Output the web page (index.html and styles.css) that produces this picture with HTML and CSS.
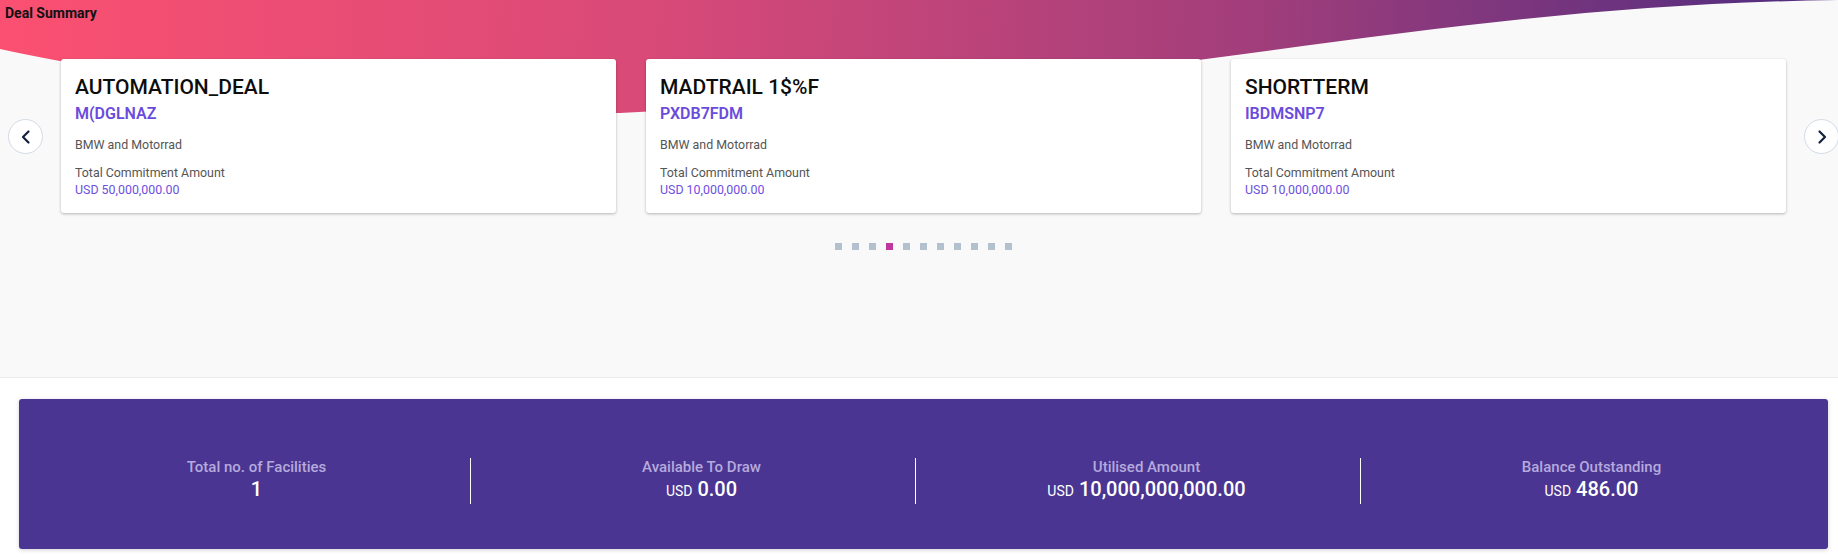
FILE: index.html
```html
<!DOCTYPE html>
<html lang="en">
<head>
<meta charset="utf-8">
<title>Deal Summary</title>
<link rel="stylesheet" href="styles.css">
</head>
<body>
<section class="summary">
  <svg class="wave" width="1838" height="120" viewBox="0 0 1838 120" preserveAspectRatio="none" aria-hidden="true">
    <defs>
      <linearGradient id="wg" x1="0" y1="0" x2="1838" y2="60" gradientUnits="userSpaceOnUse">
        <stop offset="0" stop-color="#fb5071"/>
        <stop offset="0.35" stop-color="#d94a78"/>
        <stop offset="0.68" stop-color="#a23e7b"/>
        <stop offset="1" stop-color="#4c2c80"/>
      </linearGradient>
    </defs>
    <path d="M0 0 H1838 V0 C1420 6 1200 84 620 113 C420 113 150 82 0 49 Z" fill="url(#wg)"/>
  </svg>
  <h1 class="page-title">Deal Summary</h1>
  <div class="carousel">
    <button class="nav-btn" aria-label="Previous">
      <svg width="16" height="16" viewBox="0 0 16 16"><path d="M10.5 2.5 L5 8 L10.5 13.5" fill="none" stroke="#13203d" stroke-width="2.2" stroke-linecap="round" stroke-linejoin="round"/></svg>
    </button>
    <div class="track-wrap">
      <div class="track">
        <div class="card">
          <div class="card-title">AUTOMATION_DEAL</div>
          <div class="card-code">M(DGLNAZ</div>
          <div class="card-sub">BMW and Motorrad</div>
          <div class="card-label">Total Commitment Amount</div>
          <div class="card-amount">USD 50,000,000.00</div>
        </div>
        <div class="card">
          <div class="card-title">MADTRAIL 1$%F</div>
          <div class="card-code">PXDB7FDM</div>
          <div class="card-sub">BMW and Motorrad</div>
          <div class="card-label">Total Commitment Amount</div>
          <div class="card-amount">USD 10,000,000.00</div>
        </div>
        <div class="card">
          <div class="card-title">SHORTTERM</div>
          <div class="card-code">IBDMSNP7</div>
          <div class="card-sub">BMW and Motorrad</div>
          <div class="card-label">Total Commitment Amount</div>
          <div class="card-amount">USD 10,000,000.00</div>
        </div>
      </div>
      <div class="dots">
        <span class="dot"></span><span class="dot"></span><span class="dot"></span><span class="dot active"></span><span class="dot"></span><span class="dot"></span><span class="dot"></span><span class="dot"></span><span class="dot"></span><span class="dot"></span><span class="dot"></span>
      </div>
    </div>
    <button class="nav-btn" aria-label="Next">
      <svg width="16" height="16" viewBox="0 0 16 16"><path d="M5.5 2.5 L11 8 L5.5 13.5" fill="none" stroke="#13203d" stroke-width="2.2" stroke-linecap="round" stroke-linejoin="round"/></svg>
    </button>
  </div>
</section>
<section class="totals">
  <div class="stats">
    <div class="stat">
      <div class="stat-body">
        <div class="stat-label">Total no. of Facilities</div>
        <div class="stat-value">1</div>
      </div>
      <span class="divider"></span>
    </div>
    <div class="stat">
      <div class="stat-body">
        <div class="stat-label">Available To Draw</div>
        <div class="stat-value"><span class="cur">USD</span> 0.00</div>
      </div>
      <span class="divider"></span>
    </div>
    <div class="stat">
      <div class="stat-body">
        <div class="stat-label">Utilised Amount</div>
        <div class="stat-value"><span class="cur">USD</span> 10,000,000,000.00</div>
      </div>
      <span class="divider"></span>
    </div>
    <div class="stat">
      <div class="stat-body">
        <div class="stat-label">Balance Outstanding</div>
        <div class="stat-value"><span class="cur">USD</span> 486.00</div>
      </div>
      <span class="divider hidden"></span>
    </div>
  </div>
</section>
</body>
</html>
```

FILE: styles.css
```css
* { box-sizing: border-box; }
html, body { margin: 0; padding: 0; }
body {
  width: 1838px;
  height: 557px;
  overflow: hidden;
  background: #ffffff;
  font-family: Roboto, "Liberation Sans", Arial, sans-serif;
  color: #111;
}

.summary {
  position: relative;
  height: 378px;
  background: #f9f9f9;
  border-bottom: 1px solid #ececec;
  overflow: hidden;
}

.wave {
  position: absolute;
  top: 0;
  left: 0;
}

.page-title {
  position: relative;
  margin: 0;
  padding: 4px 0 0 5px;
  height: 59px;
  font-size: 14px;
  line-height: 18px;
  font-weight: 700;
  color: #111;
}

.carousel {
  position: relative;
  display: flex;
  align-items: flex-start;
  gap: 18px;
  padding-left: 8px;
  width: 1840px;
}

.nav-btn {
  flex: none;
  width: 35px;
  height: 35px;
  margin-top: 60px;
  border-radius: 50%;
  border: 1px solid #d3dbe5;
  background: #ffffff;
  padding: 0;
  display: flex;
  align-items: center;
  justify-content: center;
}

.track-wrap {
  width: 1725px;
  display: flex;
  flex-direction: column;
  align-items: center;
}

.track {
  display: flex;
  gap: 30px;
  width: 100%;
}

.card {
  width: 555px;
  height: 154px;
  background: #ffffff;
  border-radius: 3px;
  box-shadow: 0 1px 3px rgba(0, 0, 0, 0.28);
  padding: 16px 14px 15px;
}

.card-title {
  font-size: 21px;
  line-height: 24px;
  font-weight: 500;
  color: #0d0d0d;
}

.card-code {
  margin-top: 5px;
  font-size: 16px;
  line-height: 20px;
  font-weight: 600;
  color: #6a4bdc;
}

.card-sub {
  margin-top: 13px;
  font-size: 12.4px;
  line-height: 16px;
  color: #555;
}

.card-label {
  margin-top: 12px;
  font-size: 12.4px;
  line-height: 16px;
  color: #555;
}

.card-amount {
  margin-top: 1px;
  font-size: 12.4px;
  line-height: 16px;
  color: #6d50de;
}

.dots {
  display: flex;
  gap: 10px;
  margin-top: 30px;
}

.dot {
  width: 7px;
  height: 7px;
  background: #b3c1cf;
}

.dot.active {
  background: #c2379f;
}

.totals {
  padding: 21px 10px 0 19px;
}

.stats {
  width: 1809px;
  height: 150px;
  background: #4a3592;
  border-radius: 3px;
  box-shadow: 0 1px 4px rgba(0, 0, 0, 0.18);
  display: flex;
  padding: 59px 14px 0 15px;
}

.stat {
  flex: 1;
  display: flex;
  align-items: flex-start;
}

.stat-body {
  flex: 1;
  text-align: center;
  padding-left: 9px;
}

.stat-label {
  font-size: 15px;
  line-height: 18px;
  font-weight: 500;
  color: #b6aadd;
}

.stat-value {
  margin-top: 1px;
  font-size: 20px;
  line-height: 24px;
  font-weight: 500;
  color: #ffffff;
}

.cur {
  font-size: 14px;
  font-weight: 400;
}

.divider {
  flex: none;
  width: 1px;
  height: 46px;
  background: #ffffff;
  margin-right: 8px;
}

.divider.hidden {
  background: transparent;
}
```
